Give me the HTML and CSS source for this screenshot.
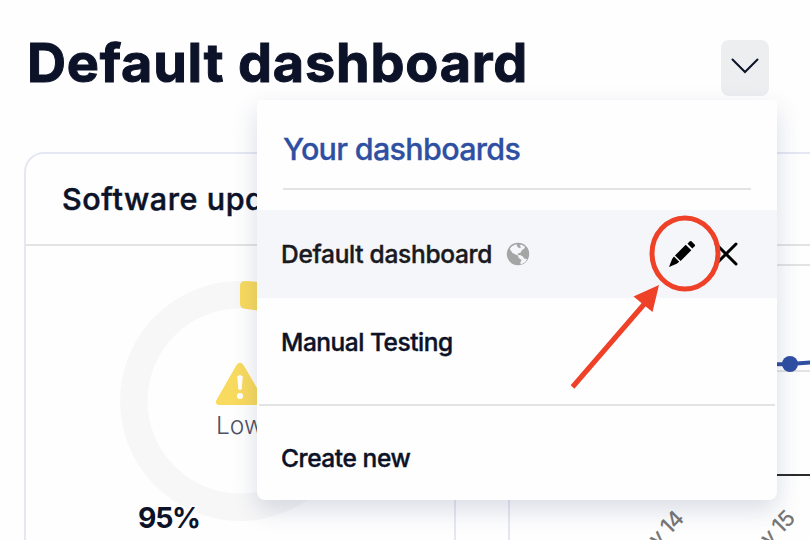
FILE: index.html
```html
<!DOCTYPE html>
<html lang="en">
<head>
<meta charset="utf-8">
<title>Default dashboard</title>
<link rel="stylesheet" href="styles.css">
</head>
<body>
<header class="page-header">
  <h1 class="page-title">Default dashboard</h1>
  <div class="picker">
    <button class="picker-button" aria-label="Choose dashboard">
      <svg width="28" height="16" viewBox="0 0 28 16"><path d="M1.500 1.500 14 14 26.500 1.500" fill="none" stroke="#0c1228" stroke-width="2" stroke-linecap="round"/></svg>
    </button>
    <div class="menu">
      <h2 class="menu-title">Your dashboards</h2>
      <div class="menu-item selected">
        <span class="name-default">Default dashboard</span>
        <svg class="globe" width="24" height="24" viewBox="0 0 24 24">
          <circle cx="12" cy="12" r="11.200" fill="#a5a5a5"/>
          <path d="M3.800 7C5.200 4.600 7.500 2.900 10.500 2.300L11.500 5l2.500 1.300 1-1.300-1.500-1.800 2-.5 3.500 2-.8 2.100-2.200 1.200-1.300 2.500-2.700 1-.3 1.800 2.500-.3 2.700 1.500 1.300 2 3 .8-2.200 3-4 2.200-.8-1.500 1.300-3-2.700-2-1-2.500-2.300-.9L6.500 11z" fill="#f4f6fa"/>
          <path d="M2 8.500 5.500 11l2 3.500 3.500 3 .5 4.500-4-.8-4-4z" fill="#a5a5a5"/>
        </svg>
        <span class="actions">
          <svg width="28" height="28" viewBox="0 0 28 28">
            <path d="M21.800 1.300q.8-.8 1.600 0l3.300 3.300q.8.800 0 1.600L24.300 8.500 19.500 3.700z M17.700 4.700 23.300 10.300 12.600 21 7 15.400z M6 16.500 11.200 21.700 8.700 23.700 1 27 4.100 19z"/>
          </svg>
          <svg width="24" height="24" viewBox="0 0 24 24"><path d="M2 2 22 22M22 2 2 22" stroke="#000" stroke-width="3" stroke-linecap="round"/></svg>
        </span>
      </div>
      <div class="menu-item"><span class="name-manual">Manual Testing</span></div>
      <div class="menu-item create"><span class="name-create">Create new</span></div>
      <svg class="callout" width="160" height="180" viewBox="565 210 160 180">
        <ellipse cx="685" cy="253.500" rx="33" ry="35.500" fill="none" stroke="#ee4127" stroke-width="5"/>
        <path d="M572.500 387 646 302" stroke="#ee4127" stroke-width="5"/>
        <path d="M659 285 652.500 312 633.500 296.500z" fill="#ee4127"/>
      </svg>
    </div>
  </div>
</header>
<main class="cards">
  <section class="card">
    <h3 class="card-title">Software updates</h3>
    <div class="card-body">
      <svg width="428" height="294" viewBox="26 246 428 294">
        <circle cx="240" cy="401" r="106.200" fill="none" stroke="#f7f7f7" stroke-width="27.500"/>
        <path d="M245 281Q240 281 240 286V303.500Q240 308.500 245 308.700L274 313 282 288.500Q264 281.500 245 281z" fill="#f8da5e"/>
        <path d="M236.500 365Q240 360.500 243.500 365L264 400Q265.500 405 260.500 405H219.500Q214.500 404.500 216.500 400z" fill="#f8da5e"/>
        <path d="M237.200 376.500Q240 373.500 242.800 376.500L241.700 389Q240 391 238.300 389z" fill="#fff"/>
        <circle cx="240" cy="396" r="3.100" fill="#fff"/>
        <text class="level" x="216" y="433.500">Low</text>
        <text class="percent" x="138" y="528" textLength="63">95%</text>
      </svg>
    </div>
  </section>
  <section class="card">
    <h3 class="card-title"></h3>
    <div class="card-body">
      <svg width="428" height="294" viewBox="510 246 428 294">
        <path d="M540 265H938M540 371H938" stroke="#e3e3e3" stroke-width="2"/>
        <path d="M540 475H938" stroke="#2b2b2e" stroke-width="2"/>
        <path d="M720 365 790 364 860 359" fill="none" stroke="#2f4fa2" stroke-width="4"/>
        <circle cx="790" cy="364" r="8" fill="#2f4fa2"/>
        <text class="tick" transform="translate(685 520) rotate(-45)">May 14</text>
        <text class="tick" transform="translate(796 520) rotate(-45)">May 15</text>
      </svg>
    </div>
  </section>
</main>
</body>
</html>
```
FILE: styles.css
```css
* { box-sizing: border-box; }

body {
  margin: 0;
  width: 810px;
  height: 540px;
  overflow: hidden;
  background: #fefefe;
  color: #0c1228;
  font-family: Inter, "Liberation Sans", sans-serif;
}

h1, h2, h3 { margin: 0; }
svg { display: block; flex: none; }

.page-header {
  display: flex;
  justify-content: space-between;
  align-items: flex-start;
  height: 152px;
  padding: 40px 41px 0 27px;
}

.page-title {
  font-size: 54px;
  line-height: 45px;
  font-weight: 700;
  letter-spacing: 0.8px;
  -webkit-text-stroke: 1px #0c1228;
  white-space: nowrap;
}

.picker { position: relative; }

.picker-button {
  display: flex;
  justify-content: center;
  width: 48px;
  height: 56px;
  padding: 18px 0 0;
  border: 0;
  border-radius: 8px;
  background: #edeef0;
}

.menu {
  position: absolute;
  z-index: 2;
  top: 60px;
  right: -8px;
  width: 520px;
  height: 400px;
  border-radius: 2px 2px 8px 8px;
  background: #fefefe;
  box-shadow: 0 10px 24px rgba(40, 60, 110, 0.17);
}

.menu-title {
  height: 90px;
  margin: 0 26px 20px;
  padding-top: 29px;
  border-bottom: 2px solid #e3e3e3;
  color: #2f4fa2;
  font-size: 30.5px;
  line-height: 40px;
  font-weight: 500;
  letter-spacing: -0.69px;
  -webkit-text-stroke: 0.3px #2f4fa2;
}

.menu-item {
  display: flex;
  align-items: center;
  height: 88px;
  padding: 0 39px 0 24px;
  font-size: 24.5px;
  font-weight: 500;
  -webkit-text-stroke: 0.4px currentColor;
  white-space: nowrap;
}

.selected { background: #f4f6fa; color: #1a1a1e; }
.name-default { letter-spacing: -0.3px; }
.name-manual { letter-spacing: -0.48px; }
.name-create { letter-spacing: -0.42px; }
.globe { margin-left: 14px; }

.actions {
  display: flex;
  align-items: center;
  gap: 18px;
  margin-left: auto;
}

.create {
  height: 106px;
  margin: 18px 2px 0;
  padding-left: 22px;
  border-top: 2px solid #e3e3e3;
}

.callout {
  position: absolute;
  left: 308px;
  top: 110px;
}

.cards {
  display: grid;
  grid-template-columns: 432px 432px;
  gap: 52px;
  height: 388px;
  padding-left: 24px;
  overflow: hidden;
}

.card {
  height: 420px;
  border: 2px solid #e5e8f3;
  border-radius: 20px;
}

.card-title {
  height: 92px;
  padding-left: 36px;
  border-bottom: 2px solid #e3e3e3;
  font-size: 30.5px;
  line-height: 90px;
  font-weight: 500;
  letter-spacing: 0.6px;
  -webkit-text-stroke: 0.5px #0c1228;
  white-space: nowrap;
}

.level { font-size: 24.5px; font-weight: 300; fill: #4d5264; }
.percent {
  font-size: 28.5px;
  font-weight: 700;
  fill: #0c1228;
  stroke: #fefefe;
  stroke-width: 4px;
  paint-order: stroke;
}
.tick { font-size: 22px; font-weight: 500; letter-spacing: -0.8px; fill: #777; text-anchor: end; }
```
